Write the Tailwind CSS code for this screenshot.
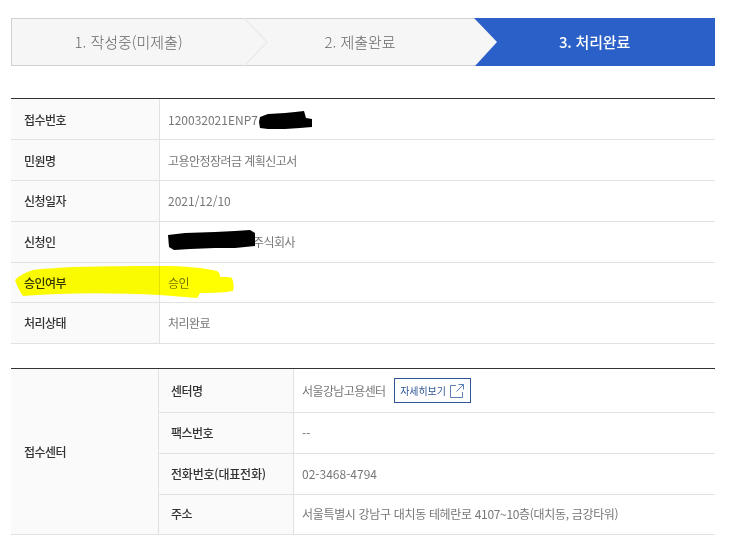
<!DOCTYPE html>
<html lang="ko">
<head>
<meta charset="utf-8">
<script src="https://cdn.jsdelivr.net/npm/@tailwindcss/browser@4"></script>
</head>
<body class="bg-white font-['Noto_Sans_CJK_KR','Noto_Sans',sans-serif] overflow-hidden">
<div class="relative w-[731px] h-[540px] pt-[18px] pl-[11px] overflow-hidden">
  <div class="relative grid grid-cols-[233px_230px_1fr] w-[704px] h-[48px] border border-[#d0d0d0] bg-[#f6f6f6] text-[15px] text-[#666]">
    <div class="flex items-center justify-center pt-px font-light">1. 작성중(미제출)</div>
    <div class="flex items-center justify-center pt-px font-light">2. 제출완료</div>
    <div class="relative flex items-center justify-center pt-px text-white font-medium tracking-[-0.2px]">
      <svg class="absolute -left-px -top-px" width="241" height="48" viewBox="0 0 241 48"><path d="M0 0H241V48H1L23 24Z" fill="#2b60c8"/></svg>
      <span class="relative">3. 처리완료</span>
    </div>
    <svg class="absolute left-[231px] -top-px" width="26" height="48" viewBox="0 0 26 48"><path d="M1 0L24 24L1 48" fill="none" stroke="#ebebeb" stroke-width="1.5"/></svg>
  </div>

  <div class="mt-[32px] w-[704px] border-t border-[#333] text-[12px] text-[#777]">
    <div class="flex h-[41px] border-b border-[#e2e2e2]"><div class="flex w-[149px] items-center border-r border-[#e2e2e2] bg-[#fafafa] pl-[13px] pt-px text-[#333] font-medium tracking-[-0.5px]">접수번호</div><div class="flex items-center pl-[8px] pt-px">120032021ENP7</div></div>
    <div class="flex h-[41px] border-b border-[#e2e2e2]"><div class="flex w-[149px] items-center border-r border-[#e2e2e2] bg-[#fafafa] pl-[13px] pt-px text-[#333] font-medium tracking-[-0.5px]">민원명</div><div class="flex items-center pl-[8px] pt-px tracking-[-0.55px]">고용안정장려금 계획신고서</div></div>
    <div class="flex h-[41px] border-b border-[#e2e2e2]"><div class="flex w-[149px] items-center border-r border-[#e2e2e2] bg-[#fafafa] pl-[13px] text-[#333] font-medium tracking-[-0.5px]">신청일자</div><div class="flex items-center pl-[8px]">2021/12/10</div></div>
    <div class="flex h-[41px] border-b border-[#e2e2e2]"><div class="flex w-[149px] items-center border-r border-[#e2e2e2] bg-[#fafafa] pl-[13px] text-[#333] font-medium tracking-[-0.5px]">신청인</div><div class="flex items-center pl-[93px] tracking-[-0.5px]">주식회사</div></div>
    <div class="flex h-[40px] border-b border-[#e2e2e2]"><div class="flex w-[149px] items-center border-r border-[#e2e2e2] bg-[#fafafa] pl-[13px] text-[#333] font-medium tracking-[-0.5px]">승인여부</div><div class="flex items-center pl-[8px] tracking-[-0.5px]">승인</div></div>
    <div class="flex h-[41px] border-b border-[#e2e2e2]"><div class="flex w-[149px] items-center border-r border-[#e2e2e2] bg-[#fafafa] pl-[13px] text-[#333] font-medium tracking-[-0.5px]">처리상태</div><div class="flex items-center pl-[8px] tracking-[-0.5px]">처리완료</div></div>
  </div>

  <div class="mt-[24px] flex w-[704px] border-t border-[#333] text-[12px] text-[#777]">
    <div class="flex w-[148px] items-center border-r border-b border-[#e2e2e2] bg-[#fafafa] pl-[13px] text-[#333] font-medium tracking-[-0.5px]">접수센터</div>
    <div class="flex-1">
      <div class="flex h-[44px] border-b border-[#e2e2e2]"><div class="flex w-[135px] items-center border-r border-[#e2e2e2] bg-[#fafafa] pl-[12px] text-[#333] font-medium tracking-[-0.5px]">센터명</div>
        <div class="flex items-center pl-[8px] tracking-[-0.6px]">서울강남고용센터
          <a class="ml-[8px] flex h-[25px] w-[77px] items-center justify-center gap-[4px] border border-[#2f5597] text-[10px] text-[#2f5597] tracking-[-0.1px]">자세히보기
            <svg width="14" height="14" viewBox="0 0 14 14" fill="none" stroke="#5b7fb5" stroke-width="1"><path d="M6 1.5H.5V13.5H12.5V8"/><path d="M8.5.5H13.5V5.5M13.5.5L6.5 7.5"/></svg>
          </a>
        </div>
      </div>
      <div class="flex h-[41px] border-b border-[#e2e2e2]"><div class="flex w-[135px] items-center border-r border-[#e2e2e2] bg-[#fafafa] pl-[12px] text-[#333] font-medium tracking-[-0.5px]">팩스번호</div><div class="flex items-center pl-[8px]">--</div></div>
      <div class="flex h-[41px] border-b border-[#e2e2e2]"><div class="flex w-[135px] items-center border-r border-[#e2e2e2] bg-[#fafafa] pl-[12px] text-[#333] font-medium tracking-[-0.2px]">전화번호(대표전화)</div><div class="flex items-center pl-[8px]">02-3468-4794</div></div>
      <div class="flex h-[40px] border-b border-[#e2e2e2]"><div class="flex w-[135px] items-center border-r border-[#e2e2e2] bg-[#fafafa] pl-[12px] pb-px text-[#333] font-medium tracking-[-0.5px]">주소</div><div class="flex items-center pl-[8px] pb-px tracking-[-0.33px]">서울특별시 강남구 대치동 테헤란로 4107~10층(대치동, 금강타워)</div></div>
    </div>
  </div>

  <svg class="absolute left-0 top-0 mix-blend-multiply pointer-events-none" width="731" height="540" viewBox="0 0 731 540">
    <path d="M15 280C20 275 26 272 33 270C50 268 60 268 73 267C110 266 140 266 160 266C185 266 205 268 217 271C220 273 220 275 220 277C226 277 231 277 232 278C234 283 234 288 233 291C222 293 210 293 200 293C199 295 198 297 197 298C185 297 172 296 160 295C120 293 70 292 23 296C20 292 17 286 15 280Z" fill="#ffff00"/>
  </svg>
  <svg class="absolute left-0 top-0 pointer-events-none" width="731" height="540" viewBox="0 0 731 540">
    <path d="M260 117L268 114L285 113L295 112L304 111L306 118L312 119L312 127L300 128L285 129L268 129L260 128L259 122Z" fill="#000"/>
    <path d="M168 235L185 233L215 232L235 231L250 230L255 233L255 246L235 248L215 248L190 249L174 250L169 247Z" fill="#000"/>
  </svg>
</div>
</body>
</html>
